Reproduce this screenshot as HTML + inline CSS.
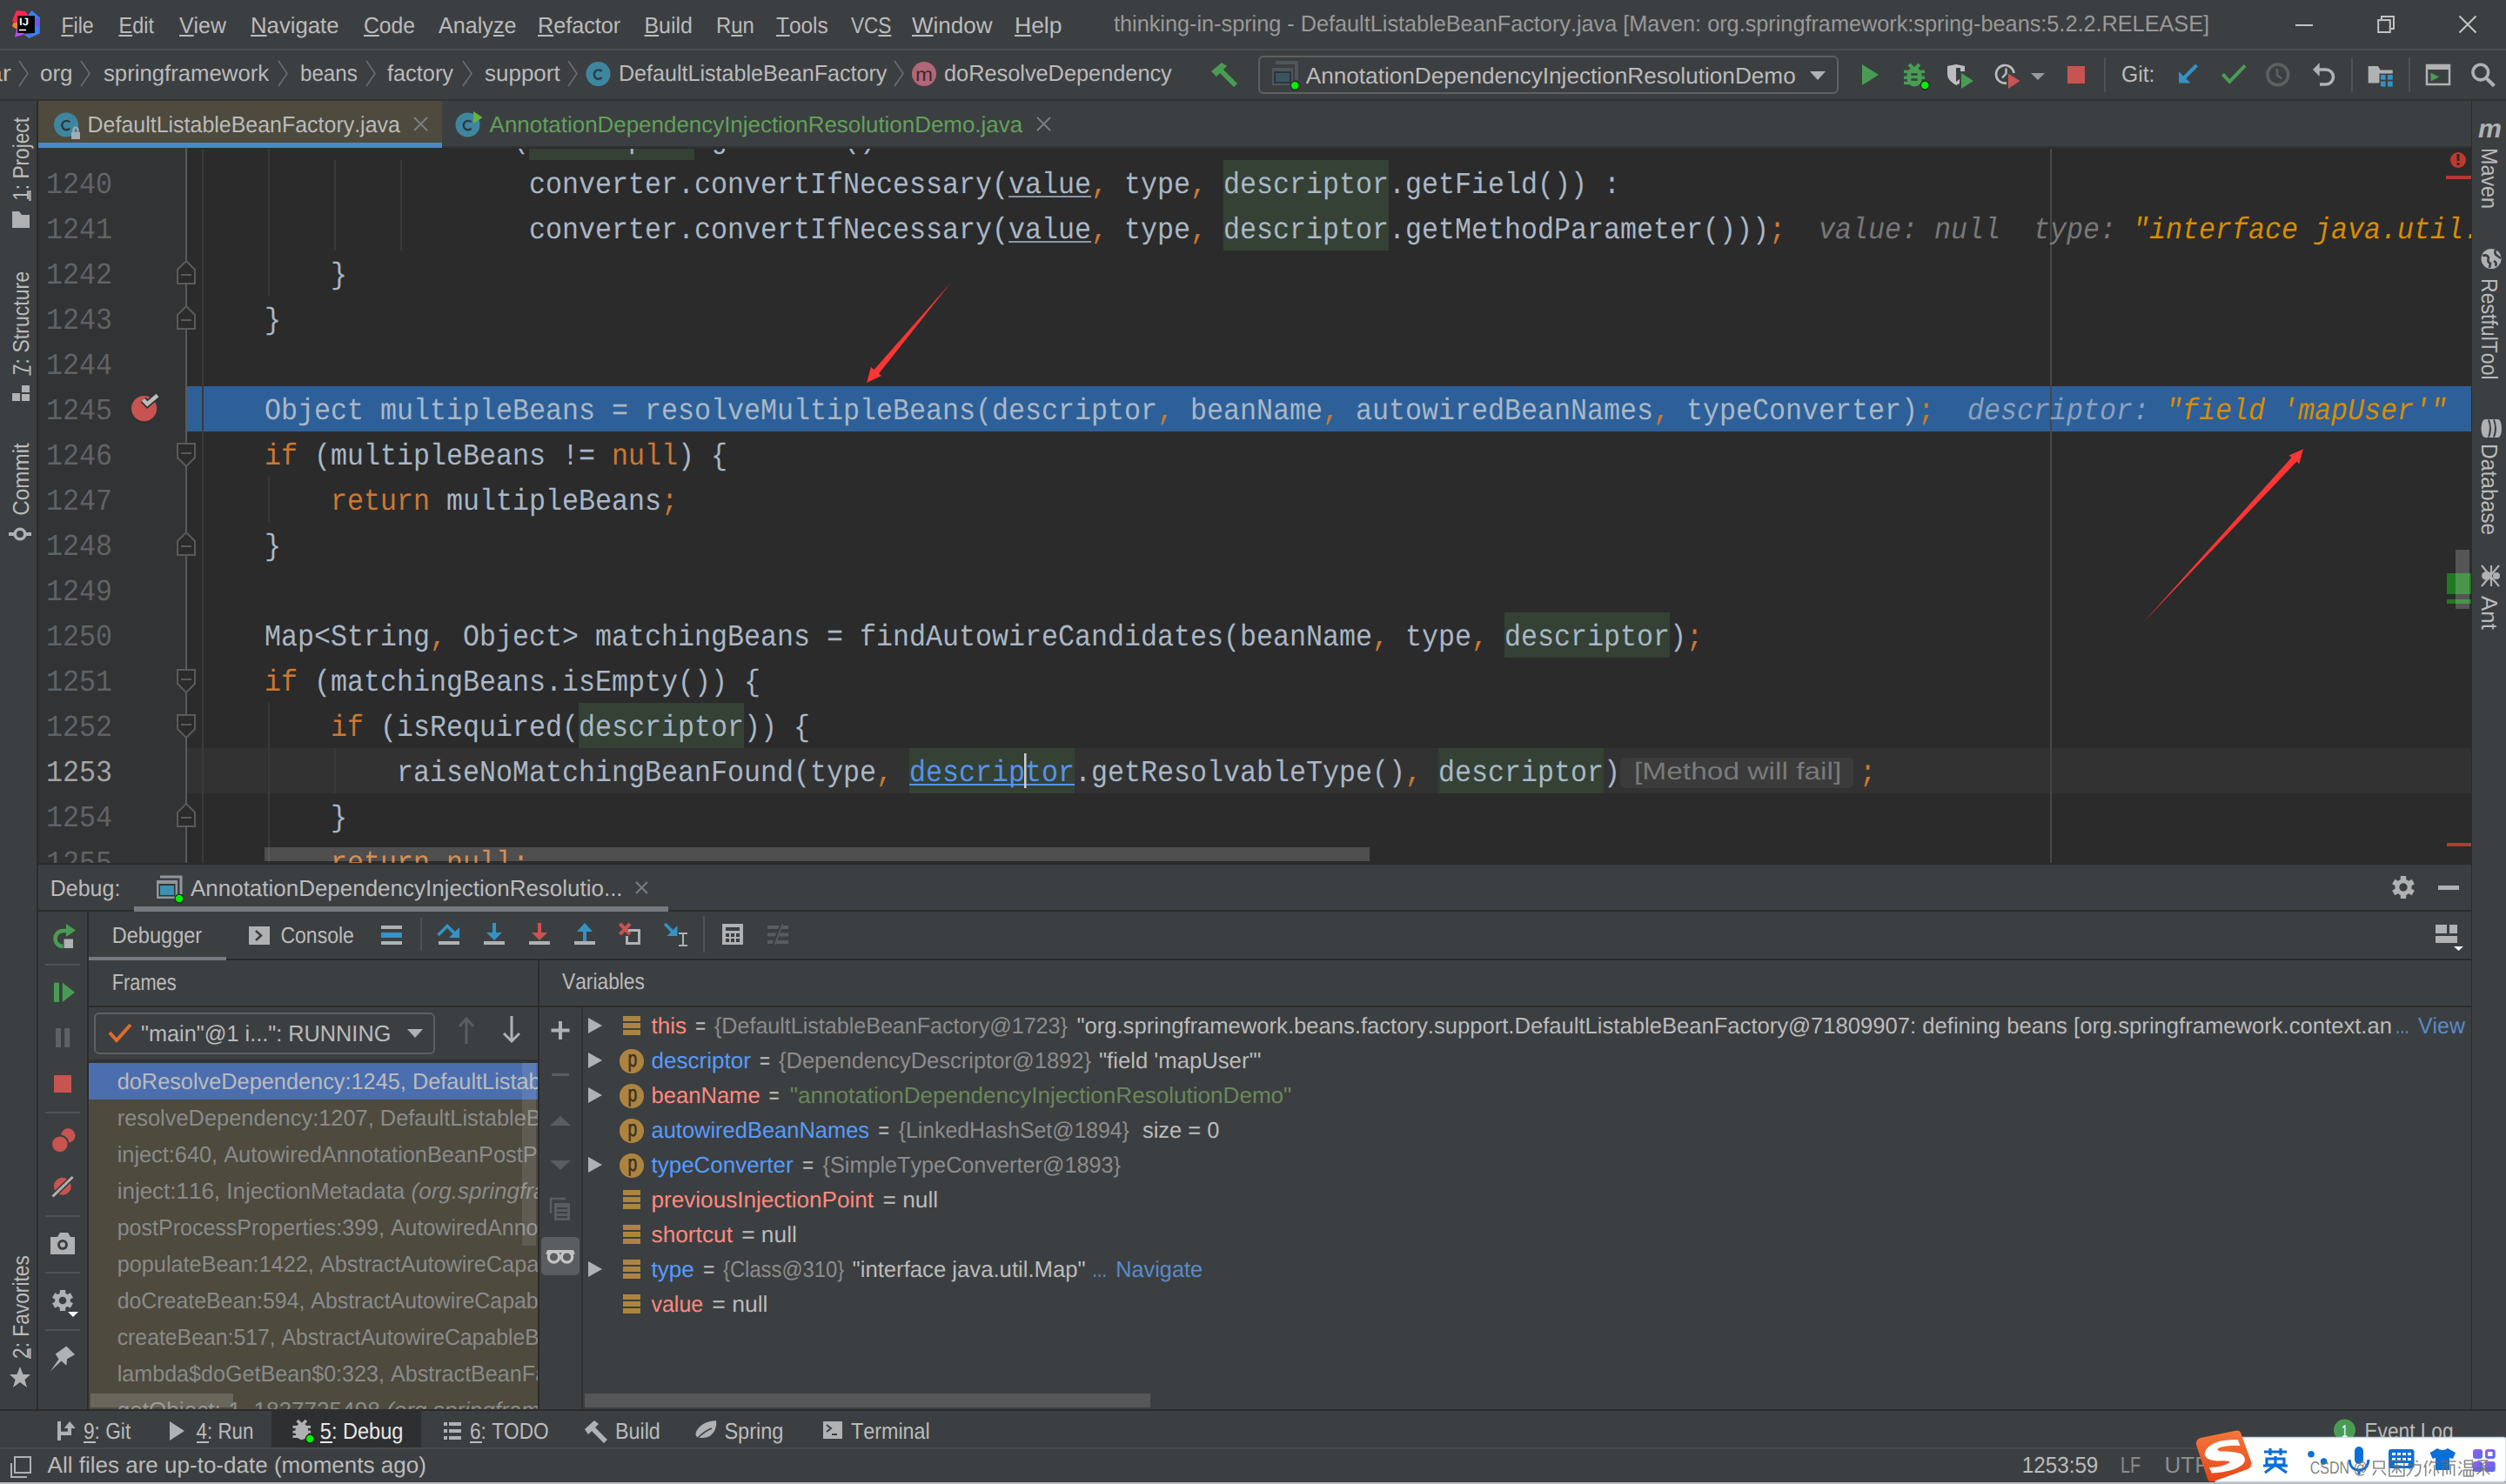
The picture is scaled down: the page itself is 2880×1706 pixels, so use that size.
<!DOCTYPE html>
<html><head><meta charset="utf-8"><title>IntelliJ IDEA - Debug</title>
<style>html,body{margin:0;padding:0;background:#3c3f41;overflow:hidden}svg{display:block}text{font-kerning:none;white-space:pre}</style></head>
<body><svg width="2880" height="1706" viewBox="0 0 2880 1706" text-rendering="geometricPrecision">
<rect x="0" y="0" width="2880" height="1706" fill="#3c3f41" />
<rect x="0" y="56" width="2880" height="2" fill="#4b4d4f" />
<polygon points="13.9,24.4 18.7,11.9 28.8,13.1 33.5,18.5 20.2,27" fill="#fe2857"/>
<polygon points="13.9,30.3 15.1,26.2 20.5,25.5 20.5,34.5" fill="#fc801d"/>
<polygon points="16.9,42.8 19,34 20.5,29 28,39.5" fill="#b74af7"/>
<polygon points="32.6,16.7 36.5,11.9 46,20.2 45.7,38.6 33.5,44 27,39.5 39.9,37.9" fill="#3d7cf0"/>
<polygon points="39.9,22 46,20.2 45.7,30 39.9,30" fill="#6b57e8"/>
<rect x="20.2" y="18.2" width="19.7" height="19.7" fill="#000000" />
<rect x="22" y="33.7" width="8.1" height="1.6" fill="#ffffff" />
<text x="22.00" y="28.8" font-family="Liberation Sans" font-size="12" fill="#ffffff" font-weight="bold" textLength="11.00" lengthAdjust="spacingAndGlyphs" >IJ</text>
<text x="70.40" y="38" font-family="Liberation Sans" font-size="26" fill="#bbbbbb" textLength="37.30" lengthAdjust="spacingAndGlyphs" >File</text>
<rect x="70.40" y="40" width="14.14" height="2" fill="#bbbbbb" />
<text x="136.50" y="38" font-family="Liberation Sans" font-size="26" fill="#bbbbbb" textLength="40.41" lengthAdjust="spacingAndGlyphs" >Edit</text>
<rect x="136.50" y="40" width="15.65" height="2" fill="#bbbbbb" />
<text x="206.00" y="38" font-family="Liberation Sans" font-size="26" fill="#bbbbbb" textLength="53.89" lengthAdjust="spacingAndGlyphs" >View</text>
<rect x="206.00" y="40" width="16.72" height="2" fill="#bbbbbb" />
<text x="288.00" y="38" font-family="Liberation Sans" font-size="26" fill="#bbbbbb" textLength="101.60" lengthAdjust="spacingAndGlyphs" >Navigate</text>
<rect x="288.00" y="40" width="18.60" height="2" fill="#bbbbbb" />
<text x="418.00" y="38" font-family="Liberation Sans" font-size="26" fill="#bbbbbb" textLength="59.13" lengthAdjust="spacingAndGlyphs" >Code</text>
<rect x="418.00" y="40" width="17.87" height="2" fill="#bbbbbb" />
<text x="504.00" y="38" font-family="Liberation Sans" font-size="26" fill="#bbbbbb" textLength="89.47" lengthAdjust="spacingAndGlyphs" >Analyze</text>
<rect x="566.91" y="40" width="12.58" height="2" fill="#bbbbbb" />
<text x="618.00" y="38" font-family="Liberation Sans" font-size="26" fill="#bbbbbb" textLength="95.26" lengthAdjust="spacingAndGlyphs" >Refactor</text>
<rect x="618.00" y="40" width="18.21" height="2" fill="#bbbbbb" />
<text x="740.50" y="38" font-family="Liberation Sans" font-size="26" fill="#bbbbbb" textLength="55.32" lengthAdjust="spacingAndGlyphs" >Build</text>
<rect x="740.50" y="40" width="16.60" height="2" fill="#bbbbbb" />
<text x="823.00" y="38" font-family="Liberation Sans" font-size="26" fill="#bbbbbb" textLength="43.71" lengthAdjust="spacingAndGlyphs" >Run</text>
<rect x="840.22" y="40" width="13.25" height="2" fill="#bbbbbb" />
<text x="892.00" y="38" font-family="Liberation Sans" font-size="26" fill="#bbbbbb" textLength="59.69" lengthAdjust="spacingAndGlyphs" >Tools</text>
<rect x="892.00" y="40" width="15.61" height="2" fill="#bbbbbb" />
<text x="978.00" y="38" font-family="Liberation Sans" font-size="26" fill="#bbbbbb" textLength="46.41" lengthAdjust="spacingAndGlyphs" >VCS</text>
<rect x="1009.35" y="40" width="15.05" height="2" fill="#bbbbbb" />
<text x="1048.00" y="38" font-family="Liberation Sans" font-size="26" fill="#bbbbbb" textLength="92.47" lengthAdjust="spacingAndGlyphs" >Window</text>
<rect x="1048.00" y="40" width="24.55" height="2" fill="#bbbbbb" />
<text x="1166.00" y="38" font-family="Liberation Sans" font-size="26" fill="#bbbbbb" textLength="54.48" lengthAdjust="spacingAndGlyphs" >Help</text>
<rect x="1166.00" y="40" width="19.14" height="2" fill="#bbbbbb" />
<text x="1280.00" y="36" font-family="Liberation Sans" font-size="26" fill="#999999" textLength="1259.02" lengthAdjust="spacingAndGlyphs" >thinking-in-spring - DefaultListableBeanFactory.java [Maven: org.springframework:spring-beans:5.2.2.RELEASE]</text>
<rect x="2638" y="28" width="20" height="2" fill="#c4c4c4" />
<rect x="2733.2" y="23.1" width="13.6" height="13.9" fill="none" stroke="#c4c4c4" stroke-width="2"/>
<path d="M2737 22 V18.9 H2751 V32.9 H2748" fill="none" stroke="#c4c4c4" stroke-width="2"/>
<path d="M2826.5 18.5 L2845.5 37.5 M2845.5 18.5 L2826.5 37.5" stroke="#c4c4c4" stroke-width="2"/>
<rect x="0" y="114" width="2880" height="2" fill="#323232" />
<text x="-20.83" y="93" font-family="Liberation Sans" font-size="26" fill="#bbbbbb" textLength="33.71" lengthAdjust="spacingAndGlyphs" >jar</text>
<path d="M22 70 L32 84.5 L22 99" fill="none" stroke="#6b6d6f" stroke-width="1.6"/>
<path d="M93 70 L103 84.5 L93 99" fill="none" stroke="#6b6d6f" stroke-width="1.6"/>
<path d="M320 70 L330 84.5 L320 99" fill="none" stroke="#6b6d6f" stroke-width="1.6"/>
<path d="M421 70 L431 84.5 L421 99" fill="none" stroke="#6b6d6f" stroke-width="1.6"/>
<path d="M532 70 L542 84.5 L532 99" fill="none" stroke="#6b6d6f" stroke-width="1.6"/>
<path d="M653 70 L663 84.5 L653 99" fill="none" stroke="#6b6d6f" stroke-width="1.6"/>
<path d="M1028 70 L1038 84.5 L1028 99" fill="none" stroke="#6b6d6f" stroke-width="1.6"/>
<text x="46.00" y="93" font-family="Liberation Sans" font-size="26" fill="#bbbbbb" textLength="37.56" lengthAdjust="spacingAndGlyphs" >org</text>
<text x="119.00" y="93" font-family="Liberation Sans" font-size="26" fill="#bbbbbb" textLength="190.13" lengthAdjust="spacingAndGlyphs" >springframework</text>
<text x="345.00" y="93" font-family="Liberation Sans" font-size="26" fill="#bbbbbb" textLength="65.83" lengthAdjust="spacingAndGlyphs" >beans</text>
<text x="445.00" y="93" font-family="Liberation Sans" font-size="26" fill="#bbbbbb" textLength="76.00" lengthAdjust="spacingAndGlyphs" >factory</text>
<text x="557.00" y="93" font-family="Liberation Sans" font-size="26" fill="#bbbbbb" textLength="86.69" lengthAdjust="spacingAndGlyphs" >support</text>
<text x="711.00" y="93" font-family="Liberation Sans" font-size="26" fill="#bbbbbb" textLength="308.30" lengthAdjust="spacingAndGlyphs" >DefaultListableBeanFactory</text>
<text x="1085.00" y="93" font-family="Liberation Sans" font-size="26" fill="#bbbbbb" textLength="261.79" lengthAdjust="spacingAndGlyphs" >doResolveDependency</text>
<circle cx="687.5" cy="85" r="14" fill="#3e86a0"/>
<path d="M691.7 82 A5.2 5.2 0 1 0 691.7 89.2" fill="none" stroke="#2b3a40" stroke-width="2.4"/>
<circle cx="1062" cy="85" r="14" fill="#b06778"/>
<text x="1052.00" y="93" font-family="Liberation Sans" font-size="22" fill="#3b2a2f" textLength="20.00" lengthAdjust="spacingAndGlyphs" >m</text>
<g fill="#499c54"><polygon points="1392,82 1404,72 1410,76 1406,80 1422,96 1418,100 1402,84 1398,88"/></g>
<rect x="1447" y="65" width="665" height="42" rx="5" fill="none" stroke="#5e6060" stroke-width="2"/>
<path d="M1466 72 H1490 V92" fill="none" stroke="#4f565b" stroke-width="4" stroke-linejoin="miter"/>
<path d="M1466 74 H1488 V92" fill="none" stroke="#4f565b" stroke-width="0"/>
<rect x="1462" y="78" width="24" height="20" fill="#4f565b" />
<rect x="1464" y="82" width="20" height="14" fill="#2f3437" />
<rect x="1466" y="84" width="16" height="10" fill="#3b5560" />
<circle cx="1488.2" cy="98.2" r="5.5" fill="#1f2a20"/><circle cx="1488.2" cy="98.2" r="4.3" fill="#00f000"/>
<text x="1500.70" y="96" font-family="Liberation Sans" font-size="26" fill="#bbbbbb" textLength="563.02" lengthAdjust="spacingAndGlyphs" >AnnotationDependencyInjectionResolutionDemo</text>
<polygon points="2080,82 2098,82 2089,92" fill="#afb1b3"/>
<polygon points="2140,74 2159,86 2140,98" fill="#499c54"/>
<g transform="translate(2200,88.4) scale(1.0)">
<path d="M-6 -14.5 L0 -8.5 L6 -14.5" fill="none" stroke="#499c54" stroke-width="4.2"/>
<rect x="-12" y="-7.7" width="24" height="3.4" fill="#499c54" />
<rect x="-12" y="-0.8999999999999999" width="24" height="3.4" fill="#499c54" />
<rect x="-12" y="5.3" width="24" height="3.4" fill="#499c54" />
<ellipse cx="0" cy="0" rx="8.8" ry="11.2" fill="#499c54"/>
<rect x="-3.6" y="-4.2" width="7.2" height="2.6" fill="#3c3f41" />
<rect x="-3.6" y="1.8" width="7.2" height="2.6" fill="#3c3f41" />
</g>
<circle cx="2212.2" cy="98.0" r="5.5" fill="#1f2a20"/><circle cx="2212.2" cy="98.0" r="4.3" fill="#00f000"/>
<path d="M2238 76 L2248 74 L2258 76 V82 H2253 V78 L2248 78 V94 L2252 91 V96 L2248 98 Q2238 92 2238 86 Z" fill="#bdbdbf"/>
<polygon points="2254,84 2268,93 2254,102" fill="#499c54"/>
<path d="M2306 95.5 A10.3 10.3 0 1 1 2314.5 84" fill="none" stroke="#bcbcbc" stroke-width="2.6"/><path d="M2305.5 78.5 V84.5 L2301 89.5" fill="none" stroke="#bcbcbc" stroke-width="2.4"/>
<polygon points="2307.9,84.4 2321.5,93.1 2307.9,101.9" fill="#c75450"/>
<polygon points="2334,84 2350,84 2342,92" fill="#9a9b9d"/>
<rect x="2376" y="76" width="20" height="20" fill="#c75450" />
<rect x="2418" y="66" width="2" height="40" fill="#505254" />
<text x="2438.00" y="94" font-family="Liberation Sans" font-size="26" fill="#bbbbbb" textLength="38.42" lengthAdjust="spacingAndGlyphs" >Git:</text>
<path d="M2524.5 75 L2509 90.5" stroke="#3592c4" stroke-width="4"/><polygon points="2504,82.3 2504,95.5 2517.5,95.5" fill="#3592c4"/>
<path d="M2554.5 85.4 L2562.3 93.8 L2580.2 75.3" fill="none" stroke="#499c54" stroke-width="4"/>
<circle cx="2617.8" cy="85.9" r="11.9" fill="none" stroke="#5e6060" stroke-width="3.5"/><path d="M2617 79 V86.5 L2622.5 90.5" fill="none" stroke="#5e6060" stroke-width="2.6"/>
<polygon points="2658,80 2665.7,72.2 2665.7,87.8" fill="#afb1b3"/><path d="M2665 80 H2673 A8.5 8.5 0 0 1 2673 97 H2666" fill="none" stroke="#afb1b3" stroke-width="3.6"/>
<rect x="2702" y="66" width="2" height="40" fill="#505254" />
<path d="M2721.7 76 H2733 L2735.5 80.4 H2749.7 V84.5 H2734.5 V95.5 H2721.7 Z" fill="#afb1b3"/>
<g fill="#3592c4"><rect x="2736" y="86" width="5.6" height="5.6"/><rect x="2744" y="86" width="5.7" height="5.6"/><rect x="2736" y="93.5" width="5.6" height="6"/><rect x="2744" y="93.5" width="5.7" height="6"/></g>
<rect x="2768" y="66" width="2" height="40" fill="#505254" />
<rect x="2789" y="75" width="26" height="22" fill="none" stroke="#afb1b3" stroke-width="2.5"/><rect x="2789" y="75" width="26" height="5" fill="#afb1b3"/>
<polygon points="2793.5,83.5 2803,88.5 2793.5,93.5" fill="#499c54"/>
<circle cx="2850.8" cy="83.1" r="8.8" fill="none" stroke="#afb1b3" stroke-width="3.6"/><path d="M2856.5 89 L2866.4 98.7" stroke="#afb1b3" stroke-width="4"/>
<rect x="42" y="116" width="2" height="1504" fill="#2b2b2b" />
<text transform="translate(33,230.80) rotate(-90)" font-family="Liberation Sans" font-size="26" fill="#bbbbbb" textLength="95.75" lengthAdjust="spacingAndGlyphs">1: Project</text>
<rect x="33.5" y="219" width="2" height="12" fill="#bbbbbb" />
<path d="M14 243 H22 L25 247 H34 V262 H14 Z" fill="#afb1b3"/>
<text transform="translate(33,431.30) rotate(-90)" font-family="Liberation Sans" font-size="26" fill="#bbbbbb" textLength="119.41" lengthAdjust="spacingAndGlyphs">7: Structure</text>
<rect x="33.5" y="420.5" width="2" height="11" fill="#bbbbbb" />
<g fill="#afb1b3"><rect x="14" y="452" width="9" height="9"/><rect x="25" y="443" width="9" height="8"/><rect x="25" y="453" width="9" height="8"/></g>
<text transform="translate(33,592.70) rotate(-90)" font-family="Liberation Sans" font-size="26" fill="#bbbbbb" textLength="83.48" lengthAdjust="spacingAndGlyphs">Commit</text>
<rect x="10" y="612" width="26" height="4" fill="#afb1b3" />
<circle cx="23" cy="614" r="5.8" fill="#3c3f41" stroke="#afb1b3" stroke-width="3.6"/>
<text transform="translate(33,1562.00) rotate(-90)" font-family="Liberation Sans" font-size="26" fill="#bbbbbb" textLength="118.81" lengthAdjust="spacingAndGlyphs">2: Favorites</text>
<rect x="33.5" y="1550" width="2" height="12" fill="#bbbbbb" />
<polygon points="23,1571 26.5,1580 35,1580 28.5,1586 31,1595 23,1589 15,1595 17.5,1586 11,1580 19.5,1580" fill="#afb1b3"/>
<rect x="2840" y="116" width="1" height="1504" fill="#2b2b2b" />
<text x="2848.00" y="158" font-family="Liberation Sans" font-size="30" fill="#afb1b3" font-style="italic" textLength="26.98" lengthAdjust="spacingAndGlyphs" font-weight="bold">m</text>
<text transform="translate(2852,170.00) rotate(90)" font-family="Liberation Sans" font-size="26" fill="#bbbbbb" textLength="70.01" lengthAdjust="spacingAndGlyphs">Maven</text>
<circle cx="2863" cy="297.5" r="11.5" fill="#afb1b3"/><path d="M2853 294 Q2858 292 2860 296 Q2858 301 2862 303 L2861 308 M2868 287 Q2866 292 2870 294 L2874 297 M2866 300 Q2870 302 2868 306" fill="none" stroke="#3c3f41" stroke-width="2.6"/>
<text transform="translate(2852,320.00) rotate(90)" font-family="Liberation Sans" font-size="26" fill="#bbbbbb" textLength="116.63" lengthAdjust="spacingAndGlyphs">RestfulTool</text>
<g fill="#afb1b3"><ellipse cx="2856" cy="492.5" rx="4.5" ry="10.5"/><rect x="2856" y="482" width="15" height="21"/><ellipse cx="2871" cy="492.5" rx="4" ry="10.5"/></g><path d="M2860 482.5 Q2864 492.5 2860 502.5 M2866 482.5 Q2870 492.5 2866 502.5" fill="none" stroke="#3c3f41" stroke-width="2"/>
<text transform="translate(2852,510.00) rotate(90)" font-family="Liberation Sans" font-size="26" fill="#bbbbbb" textLength="105.25" lengthAdjust="spacingAndGlyphs">Database</text>
<g fill="#afb1b3"><ellipse cx="2858" cy="662" rx="6" ry="5"/><ellipse cx="2869" cy="662" rx="4" ry="4"/></g><path d="M2852 650 L2872 674 M2872 650 L2852 674 M2863 650 V674" stroke="#afb1b3" stroke-width="2.2"/>
<text transform="translate(2852,685.00) rotate(90)" font-family="Liberation Sans" font-size="26" fill="#bbbbbb" textLength="39.02" lengthAdjust="spacingAndGlyphs">Ant</text>
<rect x="44" y="116" width="2796" height="54" fill="#3c3f41" />
<rect x="44" y="168" width="2796" height="2" fill="#323232" />
<rect x="44" y="116" width="464" height="48" fill="#4e4a3e" />
<rect x="44" y="164" width="464" height="6" fill="#4a88c7" />
<circle cx="76" cy="143.5" r="14" fill="#3e86a0"/>
<path d="M80.2 140.5 A5.2 5.2 0 1 0 80.2 147.7" fill="none" stroke="#2b3a40" stroke-width="2.4"/>
<path d="M84.5 152 V149 Q84.5 146.5 87 146.5 Q89.5 146.5 89.5 149 V152" fill="none" stroke="#a3acb4" stroke-width="2.2"/><rect x="82" y="151.8" width="10" height="8.2" fill="#a3acb4"/>
<text x="100.60" y="152" font-family="Liberation Sans" font-size="26" fill="#bbbbbb" textLength="359.32" lengthAdjust="spacingAndGlyphs" >DefaultListableBeanFactory.java</text>
<path d="M476 135 L491 150 M491 135 L476 150" stroke="#7b7e80" stroke-width="2"/>
<circle cx="537.5" cy="143.5" r="14" fill="#3e86a0"/>
<path d="M541.7 140.5 A5.2 5.2 0 1 0 541.7 147.7" fill="none" stroke="#2b3a40" stroke-width="2.4"/>
<polygon points="544,128 554.5,135 544,142" fill="#62b543"/>
<text x="562.60" y="152" font-family="Liberation Sans" font-size="26" fill="#62a05a" textLength="612.53" lengthAdjust="spacingAndGlyphs" >AnnotationDependencyInjectionResolutionDemo.java</text>
<path d="M1192 135 L1207 150 M1207 135 L1192 150" stroke="#7b7e80" stroke-width="2"/>
<rect x="44" y="170" width="2796" height="822" fill="#2b2b2b" />
<rect x="44" y="170" width="171" height="822" fill="#313335" />
<defs><clipPath id="edclip"><rect x="44" y="171" width="2796" height="821"/></clipPath><clipPath id="codeclip"><rect x="215" y="170" width="2625" height="822"/></clipPath></defs>
<g clip-path="url(#edclip)">
<rect x="215" y="860" width="2625" height="52" fill="#323232" />
<rect x="215" y="444" width="2625" height="52" fill="#2d6099" />
<rect x="608" y="132" width="190" height="52" fill="#344134" />
<rect x="1406" y="184" width="190" height="104" fill="#344134" />
<rect x="1729" y="704" width="190" height="52" fill="#344134" />
<rect x="665" y="808" width="190" height="52" fill="#344134" />
<rect x="1045" y="860" width="190" height="52" fill="#344134" />
<rect x="1653" y="860" width="190" height="52" fill="#344134" />
<rect x="232" y="132" width="2" height="884" fill="#393939" />
<rect x="308" y="132" width="2" height="208" fill="#393939" />
<rect x="384" y="184" width="2" height="104" fill="#393939" />
<rect x="460" y="184" width="2" height="104" fill="#393939" />
<rect x="308" y="548" width="2" height="52" fill="#393939" />
<rect x="308" y="808" width="2" height="156" fill="#393939" />
<rect x="384" y="860" width="2" height="52" fill="#393939" />
<rect x="308" y="964" width="2" height="52" fill="#393939" />
<rect x="2356" y="170" width="2" height="822" fill="#474747" />
<text x="456.00" y="170" font-family="Liberation Mono" font-size="35" fill="#cc7832" textLength="114.00" lengthAdjust="spacingAndGlyphs" >return</text>
<text x="570.00" y="170" font-family="Liberation Mono" font-size="35" fill="#a9b7c6" textLength="38.00" lengthAdjust="spacingAndGlyphs" > (</text>
<text x="608.00" y="170" font-family="Liberation Mono" font-size="35" fill="#a9b7c6" textLength="190.00" lengthAdjust="spacingAndGlyphs" >descriptor</text>
<text x="798.00" y="170" font-family="Liberation Mono" font-size="35" fill="#a9b7c6" textLength="19.00" lengthAdjust="spacingAndGlyphs" >.</text>
<text x="817.00" y="170" font-family="Liberation Mono" font-size="35" fill="#a9b7c6" textLength="152.00" lengthAdjust="spacingAndGlyphs" >getField</text>
<text x="969.00" y="170" font-family="Liberation Mono" font-size="35" fill="#a9b7c6" textLength="114.00" lengthAdjust="spacingAndGlyphs" >() != </text>
<text x="1083.00" y="170" font-family="Liberation Mono" font-size="35" fill="#cc7832" textLength="76.00" lengthAdjust="spacingAndGlyphs" >null</text>
<text x="1159.00" y="170" font-family="Liberation Mono" font-size="35" fill="#a9b7c6" textLength="38.00" lengthAdjust="spacingAndGlyphs" > ?</text>
<text x="608.00" y="222" font-family="Liberation Mono" font-size="35" fill="#a9b7c6" textLength="171.00" lengthAdjust="spacingAndGlyphs" >converter</text>
<text x="779.00" y="222" font-family="Liberation Mono" font-size="35" fill="#a9b7c6" textLength="19.00" lengthAdjust="spacingAndGlyphs" >.</text>
<text x="798.00" y="222" font-family="Liberation Mono" font-size="35" fill="#a9b7c6" textLength="342.00" lengthAdjust="spacingAndGlyphs" >convertIfNecessary</text>
<text x="1140.00" y="222" font-family="Liberation Mono" font-size="35" fill="#a9b7c6" textLength="19.00" lengthAdjust="spacingAndGlyphs" >(</text>
<text x="1159.00" y="222" font-family="Liberation Mono" font-size="35" fill="#a9b7c6" textLength="95.00" lengthAdjust="spacingAndGlyphs" >value</text>
<text x="1254.00" y="222" font-family="Liberation Mono" font-size="35" fill="#cc7832" textLength="19.00" lengthAdjust="spacingAndGlyphs" >,</text>
<text x="1292.00" y="222" font-family="Liberation Mono" font-size="35" fill="#a9b7c6" textLength="76.00" lengthAdjust="spacingAndGlyphs" >type</text>
<text x="1368.00" y="222" font-family="Liberation Mono" font-size="35" fill="#cc7832" textLength="19.00" lengthAdjust="spacingAndGlyphs" >,</text>
<text x="1406.00" y="222" font-family="Liberation Mono" font-size="35" fill="#a9b7c6" textLength="190.00" lengthAdjust="spacingAndGlyphs" >descriptor</text>
<text x="1596.00" y="222" font-family="Liberation Mono" font-size="35" fill="#a9b7c6" textLength="19.00" lengthAdjust="spacingAndGlyphs" >.</text>
<text x="1615.00" y="222" font-family="Liberation Mono" font-size="35" fill="#a9b7c6" textLength="152.00" lengthAdjust="spacingAndGlyphs" >getField</text>
<text x="1767.00" y="222" font-family="Liberation Mono" font-size="35" fill="#a9b7c6" textLength="95.00" lengthAdjust="spacingAndGlyphs" >()) :</text>
<text x="608.00" y="274" font-family="Liberation Mono" font-size="35" fill="#a9b7c6" textLength="171.00" lengthAdjust="spacingAndGlyphs" >converter</text>
<text x="779.00" y="274" font-family="Liberation Mono" font-size="35" fill="#a9b7c6" textLength="19.00" lengthAdjust="spacingAndGlyphs" >.</text>
<text x="798.00" y="274" font-family="Liberation Mono" font-size="35" fill="#a9b7c6" textLength="342.00" lengthAdjust="spacingAndGlyphs" >convertIfNecessary</text>
<text x="1140.00" y="274" font-family="Liberation Mono" font-size="35" fill="#a9b7c6" textLength="19.00" lengthAdjust="spacingAndGlyphs" >(</text>
<text x="1159.00" y="274" font-family="Liberation Mono" font-size="35" fill="#a9b7c6" textLength="95.00" lengthAdjust="spacingAndGlyphs" >value</text>
<text x="1254.00" y="274" font-family="Liberation Mono" font-size="35" fill="#cc7832" textLength="19.00" lengthAdjust="spacingAndGlyphs" >,</text>
<text x="1292.00" y="274" font-family="Liberation Mono" font-size="35" fill="#a9b7c6" textLength="76.00" lengthAdjust="spacingAndGlyphs" >type</text>
<text x="1368.00" y="274" font-family="Liberation Mono" font-size="35" fill="#cc7832" textLength="19.00" lengthAdjust="spacingAndGlyphs" >,</text>
<text x="1406.00" y="274" font-family="Liberation Mono" font-size="35" fill="#a9b7c6" textLength="190.00" lengthAdjust="spacingAndGlyphs" >descriptor</text>
<text x="1596.00" y="274" font-family="Liberation Mono" font-size="35" fill="#a9b7c6" textLength="19.00" lengthAdjust="spacingAndGlyphs" >.</text>
<text x="1615.00" y="274" font-family="Liberation Mono" font-size="35" fill="#a9b7c6" textLength="342.00" lengthAdjust="spacingAndGlyphs" >getMethodParameter</text>
<text x="1957.00" y="274" font-family="Liberation Mono" font-size="35" fill="#a9b7c6" textLength="76.00" lengthAdjust="spacingAndGlyphs" >()))</text>
<text x="2033.00" y="274" font-family="Liberation Mono" font-size="35" fill="#cc7832" textLength="19.00" lengthAdjust="spacingAndGlyphs" >;</text>
<text x="2090.00" y="274" font-family="Liberation Mono" font-size="35" fill="#787878" font-style="italic" textLength="114.00" lengthAdjust="spacingAndGlyphs" >value:</text>
<text x="2223.00" y="274" font-family="Liberation Mono" font-size="35" fill="#787878" font-style="italic" textLength="76.00" lengthAdjust="spacingAndGlyphs" >null</text>
<text x="2337.00" y="274" font-family="Liberation Mono" font-size="35" fill="#787878" font-style="italic" textLength="95.00" lengthAdjust="spacingAndGlyphs" >type:</text>
<text x="2451.00" y="274" font-family="Liberation Mono" font-size="35" fill="#d88c00" font-style="italic" textLength="475.00" lengthAdjust="spacingAndGlyphs" >&quot;interface java.util.Map&quot;</text>
<rect x="1159" y="225" width="95" height="2" fill="#8a96a8" />
<rect x="1159" y="277" width="95" height="2" fill="#8a96a8" />
<text x="380.00" y="326" font-family="Liberation Mono" font-size="35" fill="#a9b7c6" textLength="19.00" lengthAdjust="spacingAndGlyphs" >}</text>
<text x="304.00" y="378" font-family="Liberation Mono" font-size="35" fill="#a9b7c6" textLength="19.00" lengthAdjust="spacingAndGlyphs" >}</text>
<text x="304.00" y="482" font-family="Liberation Mono" font-size="35" fill="#a9b7c6" textLength="114.00" lengthAdjust="spacingAndGlyphs" >Object</text>
<text x="437.00" y="482" font-family="Liberation Mono" font-size="35" fill="#a9b7c6" textLength="247.00" lengthAdjust="spacingAndGlyphs" >multipleBeans</text>
<text x="684.00" y="482" font-family="Liberation Mono" font-size="35" fill="#a9b7c6" textLength="57.00" lengthAdjust="spacingAndGlyphs" > = </text>
<text x="741.00" y="482" font-family="Liberation Mono" font-size="35" fill="#a9b7c6" textLength="380.00" lengthAdjust="spacingAndGlyphs" >resolveMultipleBeans</text>
<text x="1121.00" y="482" font-family="Liberation Mono" font-size="35" fill="#a9b7c6" textLength="19.00" lengthAdjust="spacingAndGlyphs" >(</text>
<text x="1140.00" y="482" font-family="Liberation Mono" font-size="35" fill="#a9b7c6" textLength="190.00" lengthAdjust="spacingAndGlyphs" >descriptor</text>
<text x="1330.00" y="482" font-family="Liberation Mono" font-size="35" fill="#cc7832" textLength="19.00" lengthAdjust="spacingAndGlyphs" >,</text>
<text x="1368.00" y="482" font-family="Liberation Mono" font-size="35" fill="#a9b7c6" textLength="152.00" lengthAdjust="spacingAndGlyphs" >beanName</text>
<text x="1520.00" y="482" font-family="Liberation Mono" font-size="35" fill="#cc7832" textLength="19.00" lengthAdjust="spacingAndGlyphs" >,</text>
<text x="1558.00" y="482" font-family="Liberation Mono" font-size="35" fill="#a9b7c6" textLength="342.00" lengthAdjust="spacingAndGlyphs" >autowiredBeanNames</text>
<text x="1900.00" y="482" font-family="Liberation Mono" font-size="35" fill="#cc7832" textLength="19.00" lengthAdjust="spacingAndGlyphs" >,</text>
<text x="1938.00" y="482" font-family="Liberation Mono" font-size="35" fill="#a9b7c6" textLength="247.00" lengthAdjust="spacingAndGlyphs" >typeConverter</text>
<text x="2185.00" y="482" font-family="Liberation Mono" font-size="35" fill="#a9b7c6" textLength="19.00" lengthAdjust="spacingAndGlyphs" >)</text>
<text x="2204.00" y="482" font-family="Liberation Mono" font-size="35" fill="#cc7832" textLength="19.00" lengthAdjust="spacingAndGlyphs" >;</text>
<text x="2261.00" y="482" font-family="Liberation Mono" font-size="35" fill="#8ba0bd" font-style="italic" textLength="209.00" lengthAdjust="spacingAndGlyphs" >descriptor:</text>
<text x="2489.00" y="482" font-family="Liberation Mono" font-size="35" fill="#d88c00" font-style="italic" textLength="323.00" lengthAdjust="spacingAndGlyphs" >&quot;field &#x27;mapUser&#x27;&quot;</text>
<text x="304.00" y="534" font-family="Liberation Mono" font-size="35" fill="#cc7832" textLength="38.00" lengthAdjust="spacingAndGlyphs" >if</text>
<text x="342.00" y="534" font-family="Liberation Mono" font-size="35" fill="#a9b7c6" textLength="38.00" lengthAdjust="spacingAndGlyphs" > (</text>
<text x="380.00" y="534" font-family="Liberation Mono" font-size="35" fill="#a9b7c6" textLength="247.00" lengthAdjust="spacingAndGlyphs" >multipleBeans</text>
<text x="627.00" y="534" font-family="Liberation Mono" font-size="35" fill="#a9b7c6" textLength="76.00" lengthAdjust="spacingAndGlyphs" > != </text>
<text x="703.00" y="534" font-family="Liberation Mono" font-size="35" fill="#cc7832" textLength="76.00" lengthAdjust="spacingAndGlyphs" >null</text>
<text x="779.00" y="534" font-family="Liberation Mono" font-size="35" fill="#a9b7c6" textLength="57.00" lengthAdjust="spacingAndGlyphs" >) {</text>
<text x="380.00" y="586" font-family="Liberation Mono" font-size="35" fill="#cc7832" textLength="114.00" lengthAdjust="spacingAndGlyphs" >return</text>
<text x="513.00" y="586" font-family="Liberation Mono" font-size="35" fill="#a9b7c6" textLength="247.00" lengthAdjust="spacingAndGlyphs" >multipleBeans</text>
<text x="760.00" y="586" font-family="Liberation Mono" font-size="35" fill="#cc7832" textLength="19.00" lengthAdjust="spacingAndGlyphs" >;</text>
<text x="304.00" y="638" font-family="Liberation Mono" font-size="35" fill="#a9b7c6" textLength="19.00" lengthAdjust="spacingAndGlyphs" >}</text>
<text x="304.00" y="742" font-family="Liberation Mono" font-size="35" fill="#a9b7c6" textLength="57.00" lengthAdjust="spacingAndGlyphs" >Map</text>
<text x="361.00" y="742" font-family="Liberation Mono" font-size="35" fill="#a9b7c6" textLength="19.00" lengthAdjust="spacingAndGlyphs" >&lt;</text>
<text x="380.00" y="742" font-family="Liberation Mono" font-size="35" fill="#a9b7c6" textLength="114.00" lengthAdjust="spacingAndGlyphs" >String</text>
<text x="494.00" y="742" font-family="Liberation Mono" font-size="35" fill="#cc7832" textLength="19.00" lengthAdjust="spacingAndGlyphs" >,</text>
<text x="532.00" y="742" font-family="Liberation Mono" font-size="35" fill="#a9b7c6" textLength="114.00" lengthAdjust="spacingAndGlyphs" >Object</text>
<text x="646.00" y="742" font-family="Liberation Mono" font-size="35" fill="#a9b7c6" textLength="38.00" lengthAdjust="spacingAndGlyphs" >&gt; </text>
<text x="684.00" y="742" font-family="Liberation Mono" font-size="35" fill="#a9b7c6" textLength="247.00" lengthAdjust="spacingAndGlyphs" >matchingBeans</text>
<text x="931.00" y="742" font-family="Liberation Mono" font-size="35" fill="#a9b7c6" textLength="57.00" lengthAdjust="spacingAndGlyphs" > = </text>
<text x="988.00" y="742" font-family="Liberation Mono" font-size="35" fill="#a9b7c6" textLength="418.00" lengthAdjust="spacingAndGlyphs" >findAutowireCandidates</text>
<text x="1406.00" y="742" font-family="Liberation Mono" font-size="35" fill="#a9b7c6" textLength="19.00" lengthAdjust="spacingAndGlyphs" >(</text>
<text x="1425.00" y="742" font-family="Liberation Mono" font-size="35" fill="#a9b7c6" textLength="152.00" lengthAdjust="spacingAndGlyphs" >beanName</text>
<text x="1577.00" y="742" font-family="Liberation Mono" font-size="35" fill="#cc7832" textLength="19.00" lengthAdjust="spacingAndGlyphs" >,</text>
<text x="1615.00" y="742" font-family="Liberation Mono" font-size="35" fill="#a9b7c6" textLength="76.00" lengthAdjust="spacingAndGlyphs" >type</text>
<text x="1691.00" y="742" font-family="Liberation Mono" font-size="35" fill="#cc7832" textLength="19.00" lengthAdjust="spacingAndGlyphs" >,</text>
<text x="1729.00" y="742" font-family="Liberation Mono" font-size="35" fill="#a9b7c6" textLength="190.00" lengthAdjust="spacingAndGlyphs" >descriptor</text>
<text x="1919.00" y="742" font-family="Liberation Mono" font-size="35" fill="#a9b7c6" textLength="19.00" lengthAdjust="spacingAndGlyphs" >)</text>
<text x="1938.00" y="742" font-family="Liberation Mono" font-size="35" fill="#cc7832" textLength="19.00" lengthAdjust="spacingAndGlyphs" >;</text>
<text x="304.00" y="794" font-family="Liberation Mono" font-size="35" fill="#cc7832" textLength="38.00" lengthAdjust="spacingAndGlyphs" >if</text>
<text x="342.00" y="794" font-family="Liberation Mono" font-size="35" fill="#a9b7c6" textLength="38.00" lengthAdjust="spacingAndGlyphs" > (</text>
<text x="380.00" y="794" font-family="Liberation Mono" font-size="35" fill="#a9b7c6" textLength="247.00" lengthAdjust="spacingAndGlyphs" >matchingBeans</text>
<text x="627.00" y="794" font-family="Liberation Mono" font-size="35" fill="#a9b7c6" textLength="19.00" lengthAdjust="spacingAndGlyphs" >.</text>
<text x="646.00" y="794" font-family="Liberation Mono" font-size="35" fill="#a9b7c6" textLength="133.00" lengthAdjust="spacingAndGlyphs" >isEmpty</text>
<text x="779.00" y="794" font-family="Liberation Mono" font-size="35" fill="#a9b7c6" textLength="95.00" lengthAdjust="spacingAndGlyphs" >()) {</text>
<text x="380.00" y="846" font-family="Liberation Mono" font-size="35" fill="#cc7832" textLength="38.00" lengthAdjust="spacingAndGlyphs" >if</text>
<text x="418.00" y="846" font-family="Liberation Mono" font-size="35" fill="#a9b7c6" textLength="38.00" lengthAdjust="spacingAndGlyphs" > (</text>
<text x="456.00" y="846" font-family="Liberation Mono" font-size="35" fill="#a9b7c6" textLength="190.00" lengthAdjust="spacingAndGlyphs" >isRequired</text>
<text x="646.00" y="846" font-family="Liberation Mono" font-size="35" fill="#a9b7c6" textLength="19.00" lengthAdjust="spacingAndGlyphs" >(</text>
<text x="665.00" y="846" font-family="Liberation Mono" font-size="35" fill="#a9b7c6" textLength="190.00" lengthAdjust="spacingAndGlyphs" >descriptor</text>
<text x="855.00" y="846" font-family="Liberation Mono" font-size="35" fill="#a9b7c6" textLength="76.00" lengthAdjust="spacingAndGlyphs" >)) {</text>
<text x="456.00" y="898" font-family="Liberation Mono" font-size="35" fill="#a9b7c6" textLength="456.00" lengthAdjust="spacingAndGlyphs" >raiseNoMatchingBeanFound</text>
<text x="912.00" y="898" font-family="Liberation Mono" font-size="35" fill="#a9b7c6" textLength="19.00" lengthAdjust="spacingAndGlyphs" >(</text>
<text x="931.00" y="898" font-family="Liberation Mono" font-size="35" fill="#a9b7c6" textLength="76.00" lengthAdjust="spacingAndGlyphs" >type</text>
<text x="1007.00" y="898" font-family="Liberation Mono" font-size="35" fill="#cc7832" textLength="19.00" lengthAdjust="spacingAndGlyphs" >,</text>
<text x="1045.00" y="898" font-family="Liberation Mono" font-size="35" fill="#5394ec" textLength="190.00" lengthAdjust="spacingAndGlyphs" >descriptor</text>
<rect x="1045" y="901" width="190" height="2" fill="#5394ec" />
<text x="1235.00" y="898" font-family="Liberation Mono" font-size="35" fill="#a9b7c6" textLength="19.00" lengthAdjust="spacingAndGlyphs" >.</text>
<text x="1254.00" y="898" font-family="Liberation Mono" font-size="35" fill="#a9b7c6" textLength="323.00" lengthAdjust="spacingAndGlyphs" >getResolvableType</text>
<text x="1577.00" y="898" font-family="Liberation Mono" font-size="35" fill="#a9b7c6" textLength="38.00" lengthAdjust="spacingAndGlyphs" >()</text>
<text x="1615.00" y="898" font-family="Liberation Mono" font-size="35" fill="#cc7832" textLength="19.00" lengthAdjust="spacingAndGlyphs" >,</text>
<text x="1653.00" y="898" font-family="Liberation Mono" font-size="35" fill="#a9b7c6" textLength="190.00" lengthAdjust="spacingAndGlyphs" >descriptor</text>
<text x="1843.00" y="898" font-family="Liberation Mono" font-size="35" fill="#a9b7c6" textLength="19.00" lengthAdjust="spacingAndGlyphs" >)</text>
<rect x="1862" y="871" width="268" height="35" rx="6" fill="#3b3b3b"/>
<text x="1878.00" y="896" font-family="Liberation Sans" font-size="28" fill="#7a7a7a" textLength="238.26" lengthAdjust="spacingAndGlyphs" >[Method will fail]</text>
<text x="2137.00" y="898" font-family="Liberation Mono" font-size="35" fill="#cc7832" textLength="19.00" lengthAdjust="spacingAndGlyphs" >;</text>
<rect x="1177" y="866" width="2.5" height="40" fill="#cfcfcf" />
<text x="380.00" y="950" font-family="Liberation Mono" font-size="35" fill="#a9b7c6" textLength="19.00" lengthAdjust="spacingAndGlyphs" >}</text>
<text x="380.00" y="1002" font-family="Liberation Mono" font-size="35" fill="#cc7832" textLength="114.00" lengthAdjust="spacingAndGlyphs" >return</text>
<text x="513.00" y="1002" font-family="Liberation Mono" font-size="35" fill="#cc7832" textLength="76.00" lengthAdjust="spacingAndGlyphs" >null</text>
<text x="589.00" y="1002" font-family="Liberation Mono" font-size="35" fill="#cc7832" textLength="19.00" lengthAdjust="spacingAndGlyphs" >;</text>
</g>
<text x="53.00" y="222" font-family="Liberation Mono" font-size="35" fill="#606366" textLength="76.00" lengthAdjust="spacingAndGlyphs" clip-path="url(#edclip)">1240</text>
<text x="53.00" y="274" font-family="Liberation Mono" font-size="35" fill="#606366" textLength="76.00" lengthAdjust="spacingAndGlyphs" clip-path="url(#edclip)">1241</text>
<text x="53.00" y="326" font-family="Liberation Mono" font-size="35" fill="#606366" textLength="76.00" lengthAdjust="spacingAndGlyphs" clip-path="url(#edclip)">1242</text>
<text x="53.00" y="378" font-family="Liberation Mono" font-size="35" fill="#606366" textLength="76.00" lengthAdjust="spacingAndGlyphs" clip-path="url(#edclip)">1243</text>
<text x="53.00" y="430" font-family="Liberation Mono" font-size="35" fill="#606366" textLength="76.00" lengthAdjust="spacingAndGlyphs" clip-path="url(#edclip)">1244</text>
<text x="53.00" y="482" font-family="Liberation Mono" font-size="35" fill="#606366" textLength="76.00" lengthAdjust="spacingAndGlyphs" clip-path="url(#edclip)">1245</text>
<text x="53.00" y="534" font-family="Liberation Mono" font-size="35" fill="#606366" textLength="76.00" lengthAdjust="spacingAndGlyphs" clip-path="url(#edclip)">1246</text>
<text x="53.00" y="586" font-family="Liberation Mono" font-size="35" fill="#606366" textLength="76.00" lengthAdjust="spacingAndGlyphs" clip-path="url(#edclip)">1247</text>
<text x="53.00" y="638" font-family="Liberation Mono" font-size="35" fill="#606366" textLength="76.00" lengthAdjust="spacingAndGlyphs" clip-path="url(#edclip)">1248</text>
<text x="53.00" y="690" font-family="Liberation Mono" font-size="35" fill="#606366" textLength="76.00" lengthAdjust="spacingAndGlyphs" clip-path="url(#edclip)">1249</text>
<text x="53.00" y="742" font-family="Liberation Mono" font-size="35" fill="#606366" textLength="76.00" lengthAdjust="spacingAndGlyphs" clip-path="url(#edclip)">1250</text>
<text x="53.00" y="794" font-family="Liberation Mono" font-size="35" fill="#606366" textLength="76.00" lengthAdjust="spacingAndGlyphs" clip-path="url(#edclip)">1251</text>
<text x="53.00" y="846" font-family="Liberation Mono" font-size="35" fill="#606366" textLength="76.00" lengthAdjust="spacingAndGlyphs" clip-path="url(#edclip)">1252</text>
<text x="53.00" y="898" font-family="Liberation Mono" font-size="35" fill="#a4a3a3" textLength="76.00" lengthAdjust="spacingAndGlyphs" clip-path="url(#edclip)">1253</text>
<text x="53.00" y="950" font-family="Liberation Mono" font-size="35" fill="#606366" textLength="76.00" lengthAdjust="spacingAndGlyphs" clip-path="url(#edclip)">1254</text>
<text x="53.00" y="1002" font-family="Liberation Mono" font-size="35" fill="#606366" textLength="76.00" lengthAdjust="spacingAndGlyphs" clip-path="url(#edclip)">1255</text>
<rect x="213" y="170" width="2" height="822" fill="#5a5a5a" />
<path d="M204 326 V310 L214 300 L224 310 V326 Z" fill="#2b2b2b" stroke="#5a5a5a" stroke-width="2"/>
<rect x="208" y="315" width="12" height="2" fill="#5a5a5a" />
<path d="M204 378 V362 L214 352 L224 362 V378 Z" fill="#2b2b2b" stroke="#5a5a5a" stroke-width="2"/>
<rect x="208" y="367" width="12" height="2" fill="#5a5a5a" />
<path d="M204 638 V622 L214 612 L224 622 V638 Z" fill="#2b2b2b" stroke="#5a5a5a" stroke-width="2"/>
<rect x="208" y="627" width="12" height="2" fill="#5a5a5a" />
<path d="M204 950 V934 L214 924 L224 934 V950 Z" fill="#2b2b2b" stroke="#5a5a5a" stroke-width="2"/>
<rect x="208" y="939" width="12" height="2" fill="#5a5a5a" />
<path d="M204 510 V526 L214 536 L224 526 V510 Z" fill="#2b2b2b" stroke="#5a5a5a" stroke-width="2"/>
<rect x="208" y="520" width="12" height="2" fill="#5a5a5a" />
<path d="M204 770 V786 L214 796 L224 786 V770 Z" fill="#2b2b2b" stroke="#5a5a5a" stroke-width="2"/>
<rect x="208" y="780" width="12" height="2" fill="#5a5a5a" />
<path d="M204 822 V838 L214 848 L224 838 V822 Z" fill="#2b2b2b" stroke="#5a5a5a" stroke-width="2"/>
<rect x="208" y="832" width="12" height="2" fill="#5a5a5a" />
<circle cx="165.6" cy="469.6" r="14.6" fill="#c75450"/>
<path d="M164.5 459.5 L169.3 464.5 L181 454.5" fill="none" stroke="#313335" stroke-width="8"/>
<path d="M164.5 459.5 L169.3 464.5 L181 454.5" fill="none" stroke="#bcbcbc" stroke-width="4.5"/>
<rect x="304" y="974" width="1270" height="16" fill="#ffffff" fill-opacity="0.17"/>
<circle cx="2825" cy="184" r="9" fill="#c0392b"/>
<rect x="2823.5" y="177" width="3" height="8" fill="#2b2b2b" />
<rect x="2823.5" y="187" width="3" height="3" fill="#2b2b2b" />
<rect x="2811" y="202" width="29" height="4" fill="#b23a33" />
<rect x="2812" y="659" width="28" height="24" fill="#1f7a1f" />
<rect x="2812" y="689" width="28" height="5" fill="#1f7a1f" />
<rect x="2812" y="969" width="28" height="4" fill="#b23a33" />
<rect x="2822" y="632" width="16" height="68" fill="#ffffff" fill-opacity="0.2"/>
<rect x="44" y="992" width="2796" height="2" fill="#2b2b2b" />
<rect x="44" y="994" width="2796" height="52" fill="#3c3f41" />
<rect x="44" y="1046" width="2796" height="2" fill="#2b2b2b" />
<text x="57.80" y="1030" font-family="Liberation Sans" font-size="26" fill="#bbbbbb" textLength="80.52" lengthAdjust="spacingAndGlyphs" >Debug:</text>
<path d="M184 1008 H208 V1028" fill="none" stroke="#8f979e" stroke-width="3"/>
<rect x="180" y="1012" width="24" height="21" fill="#8f979e" />
<rect x="182.5" y="1016" width="19" height="14.5" fill="#2f3437" />
<rect x="184" y="1018" width="16" height="11" fill="#3f8fb0" />
<circle cx="206" cy="1033" r="5.5" fill="#1f2a20"/><circle cx="206" cy="1033" r="4.3" fill="#00f000"/>
<text x="219.00" y="1030" font-family="Liberation Sans" font-size="26" fill="#bbbbbb" textLength="496.58" lengthAdjust="spacingAndGlyphs" >AnnotationDependencyInjectionResolutio...</text>
<path d="M731 1014 L744 1027 M744 1014 L731 1027" stroke="#7b7e80" stroke-width="2"/>
<rect x="154" y="1042" width="614" height="6" fill="#747a80" />
<rect x="2758.8" y="1007" width="6.4" height="13" fill="#afb1b3" transform="rotate(0.0 2762 1020)"/>
<rect x="2758.8" y="1007" width="6.4" height="13" fill="#afb1b3" transform="rotate(60.0 2762 1020)"/>
<rect x="2758.8" y="1007" width="6.4" height="13" fill="#afb1b3" transform="rotate(120.0 2762 1020)"/>
<rect x="2758.8" y="1007" width="6.4" height="13" fill="#afb1b3" transform="rotate(180.0 2762 1020)"/>
<rect x="2758.8" y="1007" width="6.4" height="13" fill="#afb1b3" transform="rotate(240.0 2762 1020)"/>
<rect x="2758.8" y="1007" width="6.4" height="13" fill="#afb1b3" transform="rotate(300.0 2762 1020)"/>
<circle cx="2762" cy="1020" r="9.62" fill="#afb1b3"/>
<circle cx="2762" cy="1020" r="4.68" fill="#3c3f41"/>
<rect x="2802" y="1018" width="24" height="5" fill="#afb1b3" />
<rect x="102" y="1102" width="2738" height="2" fill="#2b2b2b" />
<rect x="100" y="1048" width="2" height="572" fill="#2b2b2b" />
<text x="128.70" y="1084" font-family="Liberation Sans" font-size="26" fill="#bbbbbb" textLength="103.53" lengthAdjust="spacingAndGlyphs" >Debugger</text>
<rect x="102" y="1100" width="158" height="4" fill="#747a80" />
<rect x="286" y="1065" width="24" height="21" fill="#afb1b3"/><path d="M294 1070 L300 1075.5 L294 1081" fill="none" stroke="#3c3f41" stroke-width="2.5"/>
<text x="322.40" y="1084" font-family="Liberation Sans" font-size="26" fill="#bbbbbb" textLength="84.53" lengthAdjust="spacingAndGlyphs" >Console</text>
<rect x="438" y="1064" width="24" height="4" fill="#afb1b3" />
<rect x="438" y="1072" width="24" height="6" fill="#3592c4" />
<rect x="438" y="1082" width="24" height="4" fill="#afb1b3" />
<rect x="483" y="1055" width="2" height="38" fill="#505254" />
<path d="M503.5 1075 L514 1064.5 L522 1072.5" fill="none" stroke="#3592c4" stroke-width="3.5"/><polygon points="528,1066 528,1078 516,1078" fill="#3592c4"/>
<rect x="504" y="1082" width="24" height="4" fill="#afb1b3" />
<rect x="566" y="1061" width="4" height="13" fill="#3592c4"/><polygon points="559,1072 577,1072 568,1081" fill="#3592c4"/>
<rect x="556" y="1082" width="24" height="4" fill="#afb1b3" />
<rect x="618" y="1061" width="4" height="13" fill="#c75450"/><polygon points="611,1072 629,1072 620,1081" fill="#c75450"/>
<rect x="608" y="1082" width="24" height="4" fill="#afb1b3" />
<rect x="670" y="1068" width="4" height="14" fill="#3592c4"/><polygon points="663,1071 681,1071 672,1061" fill="#3592c4"/>
<rect x="660" y="1082" width="24" height="4" fill="#afb1b3" />
<path d="M712.5 1062 L724 1074 M724 1062 L712.5 1074" stroke="#c75450" stroke-width="4"/><path d="M722 1069.5 H734.5 V1084.5 H720.5 V1076" fill="none" stroke="#afb1b3" stroke-width="3"/>
<path d="M764 1062 L775 1073" stroke="#3592c4" stroke-width="3.5"/><polygon points="778.5,1064 778.5,1076 766.5,1076" fill="#3592c4"/>
<path d="M780 1073 H790 M785 1073 V1087 M780 1087 H790" stroke="#afb1b3" stroke-width="2"/>
<rect x="808" y="1053" width="2" height="42" fill="#505254" />
<rect x="830" y="1062" width="24" height="24" fill="#afb1b3"/>
<g fill="#3c3f41"><rect x="834" y="1066" width="16" height="4"/><rect x="834" y="1073" width="4" height="4"/><rect x="840" y="1073" width="4" height="4"/><rect x="846" y="1073" width="4" height="4"/><rect x="834" y="1079" width="4" height="4"/><rect x="840" y="1079" width="4" height="4"/><rect x="846" y="1079" width="4" height="4"/></g>
<g fill="#5a5d5f"><rect x="882" y="1064" width="24" height="4"/><rect x="882" y="1072.5" width="24" height="4"/><rect x="882" y="1081" width="24" height="4"/></g><path d="M889 1087 L899 1061" stroke="#3c3f41" stroke-width="4"/><path d="M890.5 1086 L899.5 1062" stroke="#5a5d5f" stroke-width="1.5"/>
<g fill="#afb1b3"><rect x="2799" y="1063" width="13" height="10"/><rect x="2815" y="1063" width="9" height="10"/><rect x="2799" y="1076" width="25" height="8"/></g><polygon points="2820,1088 2831,1088 2825.5,1093" fill="#ffffff"/>
<path d="M72.5 1088 A9 9 0 0 1 72.5 1070 H77" fill="none" stroke="#499c54" stroke-width="4.5"/>
<polygon points="76,1062 87,1069.5 76,1077" fill="#499c54"/>
<rect x="73.5" y="1079.5" width="10.5" height="10.5" fill="#afb1b3" />
<rect x="52" y="1108" width="40" height="2" fill="#505254" />
<rect x="62" y="1129.7" width="6" height="22.2" fill="#499c54" />
<polygon points="71.8,1129.7 86,1140.8 71.8,1151.9" fill="#499c54"/>
<rect x="64" y="1182" width="6" height="22" fill="#5f6163" />
<rect x="74.2" y="1182" width="6" height="22" fill="#5f6163" />
<rect x="62" y="1236" width="20" height="20" fill="#c75450" />
<rect x="52" y="1278" width="40" height="2" fill="#505254" />
<circle cx="78.2" cy="1305.5" r="8.2" fill="#c75450"/><circle cx="68.8" cy="1315.3" r="10.8" fill="#3c3f41"/><circle cx="68.8" cy="1315.3" r="8.8" fill="#c75450"/>
<circle cx="71.8" cy="1363.7" r="10" fill="#c75450"/><path d="M60.5 1375.5 L83.6 1353" stroke="#3c3f41" stroke-width="6"/><path d="M60.5 1375.5 L83.6 1353" stroke="#afb1b3" stroke-width="3"/>
<rect x="52" y="1397" width="40" height="2" fill="#505254" />
<path d="M58 1422 H66 L69 1417 H78 L81 1422 H86 V1442 H58 Z" fill="#afb1b3"/><circle cx="72" cy="1431" r="6" fill="#3c3f41"/><circle cx="72" cy="1431" r="3" fill="#afb1b3"/>
<rect x="52" y="1462" width="40" height="2" fill="#505254" />
<rect x="68.8" y="1483" width="6.4" height="12" fill="#afb1b3" transform="rotate(0.0 72 1495)"/>
<rect x="68.8" y="1483" width="6.4" height="12" fill="#afb1b3" transform="rotate(60.0 72 1495)"/>
<rect x="68.8" y="1483" width="6.4" height="12" fill="#afb1b3" transform="rotate(120.0 72 1495)"/>
<rect x="68.8" y="1483" width="6.4" height="12" fill="#afb1b3" transform="rotate(180.0 72 1495)"/>
<rect x="68.8" y="1483" width="6.4" height="12" fill="#afb1b3" transform="rotate(240.0 72 1495)"/>
<rect x="68.8" y="1483" width="6.4" height="12" fill="#afb1b3" transform="rotate(300.0 72 1495)"/>
<circle cx="72" cy="1495" r="8.879999999999999" fill="#afb1b3"/>
<circle cx="72" cy="1495" r="4.32" fill="#3c3f41"/>
<polygon points="78,1508 90,1508 84,1514" fill="#ffffff"/>
<rect x="52" y="1528" width="40" height="2" fill="#505254" />
<path d="M63.7 1556.4 L76.4 1547.5 L86 1557.2 L77.1 1562.3 L76.4 1569.8 L70.5 1564.5 L57.8 1576.4 L67.5 1562.5 Z" fill="#afb1b3"/>
<rect x="102" y="1104" width="516" height="52" fill="#3c3f41" />
<rect x="102" y="1156" width="2738" height="2" fill="#2b2b2b" />
<text x="128.70" y="1137.5" font-family="Liberation Sans" font-size="26" fill="#bbbbbb" textLength="73.98" lengthAdjust="spacingAndGlyphs" >Frames</text>
<rect x="109" y="1165" width="390" height="46" rx="5" fill="none" stroke="#5e6060" stroke-width="2"/>
<path d="M126 1187 L134 1196 L150 1178" fill="none" stroke="#e06c2a" stroke-width="4"/>
<text x="162.00" y="1197" font-family="Liberation Sans" font-size="26" fill="#bbbbbb" textLength="287.32" lengthAdjust="spacingAndGlyphs" >&quot;main&quot;@1 i...&quot;: RUNNING</text>
<polygon points="468,1183 486,1183 477,1193" fill="#afb1b3"/>
<path d="M536 1200 V1172 M528 1180 L536 1171 L544 1180" fill="none" stroke="#5a5d5f" stroke-width="3"/>
<path d="M588 1168 V1197 M579 1188 L588 1197 L597 1188" fill="none" stroke="#afb1b3" stroke-width="3"/>
<rect x="102" y="1218" width="516" height="4" fill="#323232" />
<rect x="102" y="1222" width="516" height="398" fill="#4e4a3e" />
<rect x="102" y="1222" width="516" height="42" fill="#4b6eaf" />
<defs><clipPath id="frclip"><rect x="102" y="1222" width="516" height="398"/></clipPath></defs><g clip-path="url(#frclip)">
<text x="134.70" y="1252" font-family="Liberation Sans" font-size="26" fill="#bbbbbb" textLength="657.24" lengthAdjust="spacingAndGlyphs" >doResolveDependency:1245, DefaultListableBeanFactory </text>
<text x="791.94" y="1252" font-family="Liberation Sans" font-size="26" fill="#bbbbbb" font-style="italic" textLength="496.21" lengthAdjust="spacingAndGlyphs" >(org.springframework.beans.factory.support)</text>
<text x="134.70" y="1294" font-family="Liberation Sans" font-size="26" fill="#8a8a8a" textLength="621.13" lengthAdjust="spacingAndGlyphs" >resolveDependency:1207, DefaultListableBeanFactory </text>
<text x="755.83" y="1294" font-family="Liberation Sans" font-size="26" fill="#8a8a8a" font-style="italic" textLength="497.74" lengthAdjust="spacingAndGlyphs" >(org.springframework.beans.factory.support)</text>
<text x="134.70" y="1336" font-family="Liberation Sans" font-size="26" fill="#8a8a8a" textLength="861.66" lengthAdjust="spacingAndGlyphs" >inject:640, AutowiredAnnotationBeanPostProcessor$AutowiredFieldElement </text>
<text x="996.36" y="1336" font-family="Liberation Sans" font-size="26" fill="#8a8a8a" font-style="italic" textLength="248.12" lengthAdjust="spacingAndGlyphs" >(org.springframework)</text>
<text x="134.70" y="1378" font-family="Liberation Sans" font-size="26" fill="#8a8a8a" textLength="337.85" lengthAdjust="spacingAndGlyphs" >inject:116, InjectionMetadata </text>
<text x="472.55" y="1378" font-family="Liberation Sans" font-size="26" fill="#8a8a8a" font-style="italic" textLength="546.88" lengthAdjust="spacingAndGlyphs" >(org.springframework.beans.factory.annotation)</text>
<text x="134.70" y="1420" font-family="Liberation Sans" font-size="26" fill="#8a8a8a" textLength="773.04" lengthAdjust="spacingAndGlyphs" >postProcessProperties:399, AutowiredAnnotationBeanPostProcessor </text>
<text x="907.74" y="1420" font-family="Liberation Sans" font-size="26" fill="#8a8a8a" font-style="italic" textLength="52.90" lengthAdjust="spacingAndGlyphs" >(org)</text>
<text x="134.70" y="1462" font-family="Liberation Sans" font-size="26" fill="#8a8a8a" textLength="668.50" lengthAdjust="spacingAndGlyphs" >populateBean:1422, AbstractAutowireCapableBeanFactory </text>
<text x="803.20" y="1462" font-family="Liberation Sans" font-size="26" fill="#8a8a8a" font-style="italic" textLength="53.45" lengthAdjust="spacingAndGlyphs" >(org)</text>
<text x="134.70" y="1504" font-family="Liberation Sans" font-size="26" fill="#8a8a8a" textLength="651.25" lengthAdjust="spacingAndGlyphs" >doCreateBean:594, AbstractAutowireCapableBeanFactory </text>
<text x="785.95" y="1504" font-family="Liberation Sans" font-size="26" fill="#8a8a8a" font-style="italic" textLength="52.63" lengthAdjust="spacingAndGlyphs" >(org)</text>
<text x="134.70" y="1546" font-family="Liberation Sans" font-size="26" fill="#8a8a8a" textLength="616.05" lengthAdjust="spacingAndGlyphs" >createBean:517, AbstractAutowireCapableBeanFactory </text>
<text x="750.75" y="1546" font-family="Liberation Sans" font-size="26" fill="#8a8a8a" font-style="italic" textLength="52.46" lengthAdjust="spacingAndGlyphs" >(org)</text>
<text x="134.70" y="1588" font-family="Liberation Sans" font-size="26" fill="#8a8a8a" textLength="555.83" lengthAdjust="spacingAndGlyphs" >lambda$doGetBean$0:323, AbstractBeanFactory </text>
<text x="690.53" y="1588" font-family="Liberation Sans" font-size="26" fill="#8a8a8a" font-style="italic" textLength="246.34" lengthAdjust="spacingAndGlyphs" >(org.springframework)</text>
<text x="134.70" y="1630" font-family="Liberation Sans" font-size="26" fill="#8a8a8a" textLength="309.30" lengthAdjust="spacingAndGlyphs" >getObject:-1, 1827725498 </text>
<text x="444.00" y="1630" font-family="Liberation Sans" font-size="26" fill="#8a8a8a" font-style="italic" textLength="901.14" lengthAdjust="spacingAndGlyphs" >(org.springframework.beans.factory.support.AbstractBeanFactory$$Lambda$)</text>
</g>
<rect x="600" y="1222" width="16" height="210" fill="#ffffff" fill-opacity="0.1"/>
<rect x="104" y="1602" width="164" height="16" fill="#ffffff" fill-opacity="0.15"/>
<rect x="618" y="1104" width="2" height="516" fill="#2b2b2b" />
<rect x="668" y="1158" width="2" height="462" fill="#323232" />
<path d="M644 1174 V1195 M633.5 1184.5 H654.5" stroke="#afb1b3" stroke-width="4"/>
<rect x="634" y="1234" width="20" height="3" fill="#5a5d5f" />
<polygon points="632,1294 656,1294 644,1283" fill="#5a5d5f"/>
<polygon points="632,1334 656,1334 644,1345" fill="#5a5d5f"/>
<path d="M633 1395 V1378 H650" fill="none" stroke="#5a5d5f" stroke-width="2.5"/><rect x="637" y="1383" width="18" height="20" fill="#5a5d5f"/><g fill="#3c3f41"><rect x="640" y="1388" width="12" height="2"/><rect x="640" y="1393" width="12" height="2"/><rect x="640" y="1398" width="12" height="2"/></g>
<rect x="622" y="1422" width="44" height="44" rx="5" fill="#5b5e61"/>
<circle cx="636.5" cy="1445" r="6.2" fill="none" stroke="#c4c4c4" stroke-width="3.2"/><circle cx="651.5" cy="1445" r="6.2" fill="none" stroke="#c4c4c4" stroke-width="3.2"/><path d="M628.5 1442 L630 1438.5 H658 L659.5 1442" fill="none" stroke="#c4c4c4" stroke-width="2.8"/>
<text x="646.00" y="1137" font-family="Liberation Sans" font-size="26" fill="#bbbbbb" textLength="94.90" lengthAdjust="spacingAndGlyphs" >Variables</text>
<polygon points="676,1170 692,1179 676,1188" fill="#afb1b3"/>
<g fill="#ad843f"><rect x="716" y="1168" width="20" height="6"/><rect x="716" y="1176" width="20" height="6"/><rect x="716" y="1184" width="20" height="6"/></g>
<text x="748.50" y="1188" font-family="Liberation Sans" font-size="26" fill="#ff8a80" textLength="40.45" lengthAdjust="spacingAndGlyphs" >this</text>
<text x="799.00" y="1188" font-family="Liberation Sans" font-size="26" fill="#bbbbbb" textLength="12.15" lengthAdjust="spacingAndGlyphs" >=</text>
<text x="821.00" y="1188" font-family="Liberation Sans" font-size="26" fill="#8c8c8c" textLength="405.89" lengthAdjust="spacingAndGlyphs" >{DefaultListableBeanFactory@1723}</text>
<text x="1237.40" y="1188" font-family="Liberation Sans" font-size="26" fill="#bbbbbb" textLength="1511.52" lengthAdjust="spacingAndGlyphs" >&quot;org.springframework.beans.factory.support.DefaultListableBeanFactory@71809907: defining beans [org.springframework.context.an</text>
<text x="2753.00" y="1188" font-family="Liberation Sans" font-size="26" fill="#5a8bc8" textLength="15.75" lengthAdjust="spacingAndGlyphs" >...</text>
<text x="2779.00" y="1188" font-family="Liberation Sans" font-size="26" fill="#5a8bc8" textLength="53.89" lengthAdjust="spacingAndGlyphs" >View</text>
<polygon points="676,1210 692,1219 676,1228" fill="#afb1b3"/>
<circle cx="726" cy="1220" r="14" fill="#ad843f"/>
<text x="721.40" y="1225.5" font-family="Liberation Sans" font-size="26" fill="#3a3224" textLength="10.74" lengthAdjust="spacingAndGlyphs" stroke="#3a3224" stroke-width="0.6">p</text>
<text x="748.50" y="1228" font-family="Liberation Sans" font-size="26" fill="#559cff" textLength="114.43" lengthAdjust="spacingAndGlyphs" >descriptor</text>
<text x="872.80" y="1228" font-family="Liberation Sans" font-size="26" fill="#bbbbbb" textLength="12.35" lengthAdjust="spacingAndGlyphs" >=</text>
<text x="895.00" y="1228" font-family="Liberation Sans" font-size="26" fill="#8c8c8c" textLength="358.98" lengthAdjust="spacingAndGlyphs" >{DependencyDescriptor@1892}</text>
<text x="1263.00" y="1228" font-family="Liberation Sans" font-size="26" fill="#bbbbbb" textLength="186.47" lengthAdjust="spacingAndGlyphs" >&quot;field &#x27;mapUser&#x27;&quot;</text>
<polygon points="676,1250 692,1259 676,1268" fill="#afb1b3"/>
<circle cx="726" cy="1260" r="14" fill="#ad843f"/>
<text x="721.40" y="1265.5" font-family="Liberation Sans" font-size="26" fill="#3a3224" textLength="10.74" lengthAdjust="spacingAndGlyphs" stroke="#3a3224" stroke-width="0.6">p</text>
<text x="748.50" y="1268" font-family="Liberation Sans" font-size="26" fill="#ff8a80" textLength="125.15" lengthAdjust="spacingAndGlyphs" >beanName</text>
<text x="883.50" y="1268" font-family="Liberation Sans" font-size="26" fill="#bbbbbb" textLength="12.25" lengthAdjust="spacingAndGlyphs" >=</text>
<text x="907.70" y="1268" font-family="Liberation Sans" font-size="26" fill="#6a8759" textLength="576.70" lengthAdjust="spacingAndGlyphs" >&quot;annotationDependencyInjectionResolutionDemo&quot;</text>
<circle cx="726" cy="1300" r="14" fill="#ad843f"/>
<text x="721.40" y="1305.5" font-family="Liberation Sans" font-size="26" fill="#3a3224" textLength="10.74" lengthAdjust="spacingAndGlyphs" stroke="#3a3224" stroke-width="0.6">p</text>
<text x="748.50" y="1308" font-family="Liberation Sans" font-size="26" fill="#559cff" textLength="250.56" lengthAdjust="spacingAndGlyphs" >autowiredBeanNames</text>
<text x="1009.30" y="1308" font-family="Liberation Sans" font-size="26" fill="#bbbbbb" textLength="12.86" lengthAdjust="spacingAndGlyphs" >=</text>
<text x="1032.70" y="1308" font-family="Liberation Sans" font-size="26" fill="#8c8c8c" textLength="265.18" lengthAdjust="spacingAndGlyphs" >{LinkedHashSet@1894}</text>
<text x="1313.00" y="1308" font-family="Liberation Sans" font-size="26" fill="#bbbbbb" textLength="88.31" lengthAdjust="spacingAndGlyphs" >size = 0</text>
<polygon points="676,1330 692,1339 676,1348" fill="#afb1b3"/>
<circle cx="726" cy="1340" r="14" fill="#ad843f"/>
<text x="721.40" y="1345.5" font-family="Liberation Sans" font-size="26" fill="#3a3224" textLength="10.74" lengthAdjust="spacingAndGlyphs" stroke="#3a3224" stroke-width="0.6">p</text>
<text x="748.50" y="1348" font-family="Liberation Sans" font-size="26" fill="#559cff" textLength="163.05" lengthAdjust="spacingAndGlyphs" >typeConverter</text>
<text x="922.00" y="1348" font-family="Liberation Sans" font-size="26" fill="#bbbbbb" textLength="13.16" lengthAdjust="spacingAndGlyphs" >=</text>
<text x="945.60" y="1348" font-family="Liberation Sans" font-size="26" fill="#8c8c8c" textLength="342.33" lengthAdjust="spacingAndGlyphs" >{SimpleTypeConverter@1893}</text>
<g fill="#ad843f"><rect x="716" y="1368" width="20" height="6"/><rect x="716" y="1376" width="20" height="6"/><rect x="716" y="1384" width="20" height="6"/></g>
<text x="748.50" y="1388" font-family="Liberation Sans" font-size="26" fill="#ff8a80" textLength="255.61" lengthAdjust="spacingAndGlyphs" >previousInjectionPoint</text>
<text x="1014.50" y="1388" font-family="Liberation Sans" font-size="26" fill="#bbbbbb" textLength="63.57" lengthAdjust="spacingAndGlyphs" >= null</text>
<g fill="#ad843f"><rect x="716" y="1408" width="20" height="6"/><rect x="716" y="1416" width="20" height="6"/><rect x="716" y="1424" width="20" height="6"/></g>
<text x="748.50" y="1428" font-family="Liberation Sans" font-size="26" fill="#ff8a80" textLength="93.45" lengthAdjust="spacingAndGlyphs" >shortcut</text>
<text x="852.20" y="1428" font-family="Liberation Sans" font-size="26" fill="#bbbbbb" textLength="63.67" lengthAdjust="spacingAndGlyphs" >= null</text>
<polygon points="676,1450 692,1459 676,1468" fill="#afb1b3"/>
<g fill="#ad843f"><rect x="716" y="1448" width="20" height="6"/><rect x="716" y="1456" width="20" height="6"/><rect x="716" y="1464" width="20" height="6"/></g>
<text x="748.50" y="1468" font-family="Liberation Sans" font-size="26" fill="#559cff" textLength="49.23" lengthAdjust="spacingAndGlyphs" >type</text>
<text x="808.00" y="1468" font-family="Liberation Sans" font-size="26" fill="#bbbbbb" textLength="13.47" lengthAdjust="spacingAndGlyphs" >=</text>
<text x="831.00" y="1468" font-family="Liberation Sans" font-size="26" fill="#8c8c8c" textLength="139.13" lengthAdjust="spacingAndGlyphs" >{Class@310}</text>
<text x="979.60" y="1468" font-family="Liberation Sans" font-size="26" fill="#bbbbbb" textLength="268.09" lengthAdjust="spacingAndGlyphs" >&quot;interface java.util.Map&quot;</text>
<text x="1255.60" y="1468" font-family="Liberation Sans" font-size="26" fill="#5a8bc8" textLength="16.44" lengthAdjust="spacingAndGlyphs" >...</text>
<text x="1282.30" y="1468" font-family="Liberation Sans" font-size="26" fill="#5a8bc8" textLength="99.71" lengthAdjust="spacingAndGlyphs" >Navigate</text>
<g fill="#ad843f"><rect x="716" y="1488" width="20" height="6"/><rect x="716" y="1496" width="20" height="6"/><rect x="716" y="1504" width="20" height="6"/></g>
<text x="748.50" y="1508" font-family="Liberation Sans" font-size="26" fill="#ff8a80" textLength="59.63" lengthAdjust="spacingAndGlyphs" >value</text>
<text x="818.30" y="1508" font-family="Liberation Sans" font-size="26" fill="#bbbbbb" textLength="64.17" lengthAdjust="spacingAndGlyphs" >= null</text>
<rect x="672" y="1602" width="650" height="16" fill="#ffffff" fill-opacity="0.13"/>
<rect x="0" y="1620" width="2880" height="2" fill="#2b2b2b" />
<rect x="0" y="1622" width="2880" height="42" fill="#3c3f41" />
<rect x="312" y="1621" width="172" height="43" fill="#2d2f30" />
<rect x="0" y="1664" width="2880" height="2" fill="#484a4c" />
<rect x="66" y="1634" width="4" height="22" fill="#afb1b3" />
<rect x="70" y="1645.7" width="12" height="4.3" fill="#afb1b3" />
<rect x="77.9" y="1641.6" width="4.1" height="8.4" fill="#afb1b3" />
<polygon points="73.7,1642.1 86.7,1642.1 80.2,1634.1" fill="#afb1b3"/>
<text x="96.00" y="1654" font-family="Liberation Sans" font-size="26" fill="#bbbbbb" textLength="54.22" lengthAdjust="spacingAndGlyphs" >9: Git</text>
<rect x="96" y="1657" width="14" height="2" fill="#bbbbbb" />
<polygon points="195,1634 212,1645 195,1656" fill="#afb1b3"/>
<text x="225.60" y="1654" font-family="Liberation Sans" font-size="26" fill="#bbbbbb" textLength="65.74" lengthAdjust="spacingAndGlyphs" >4: Run</text>
<rect x="226" y="1657" width="14" height="2" fill="#bbbbbb" />
<g transform="translate(346.8,1645.5) scale(0.86)">
<path d="M-6 -14.5 L0 -8.5 L6 -14.5" fill="none" stroke="#afb1b3" stroke-width="4.2"/>
<rect x="-12" y="-7.7" width="24" height="3.4" fill="#afb1b3" />
<rect x="-12" y="-0.8999999999999999" width="24" height="3.4" fill="#afb1b3" />
<rect x="-12" y="5.3" width="24" height="3.4" fill="#afb1b3" />
<ellipse cx="0" cy="0" rx="8.8" ry="11.2" fill="#afb1b3"/>
</g>
<circle cx="356.3" cy="1654.0" r="5.5" fill="#1f2a20"/><circle cx="356.3" cy="1654.0" r="4.3" fill="#00f000"/>
<text x="367.80" y="1654" font-family="Liberation Sans" font-size="26" fill="#e8e8e8" textLength="95.64" lengthAdjust="spacingAndGlyphs" >5: Debug</text>
<rect x="368" y="1657" width="14" height="2" fill="#e8e8e8" />
<g fill="#afb1b3"><rect x="510" y="1635" width="4" height="4"/><rect x="516" y="1635" width="14" height="4"/><rect x="510" y="1643" width="4" height="4"/><rect x="516" y="1643" width="14" height="4"/><rect x="510" y="1651" width="4" height="4"/><rect x="516" y="1651" width="14" height="4"/></g>
<text x="540.00" y="1654" font-family="Liberation Sans" font-size="26" fill="#bbbbbb" textLength="90.74" lengthAdjust="spacingAndGlyphs" >6: TODO</text>
<rect x="540" y="1657" width="14" height="2" fill="#bbbbbb" />
<polygon points="672,1643 683,1633 688,1637 684,1641 698,1655 694,1659 680,1645 676,1649" fill="#afb1b3"/>
<text x="707.00" y="1654" font-family="Liberation Sans" font-size="26" fill="#bbbbbb" textLength="51.83" lengthAdjust="spacingAndGlyphs" >Build</text>
<path d="M823 1633 Q806 1634 800 1646 Q798 1652 804 1653 Q818 1654 822 1643 Q824 1638 823 1633 Z" fill="#afb1b3"/><path d="M802 1653 Q810 1645 818 1642" fill="none" stroke="#3c3f41" stroke-width="1.5"/>
<text x="832.40" y="1654" font-family="Liberation Sans" font-size="26" fill="#bbbbbb" textLength="68.03" lengthAdjust="spacingAndGlyphs" >Spring</text>
<rect x="946" y="1634" width="22" height="20" fill="#afb1b3"/><path d="M950 1638 L955 1642 L950 1646 M956 1649 H962" fill="none" stroke="#3c3f41" stroke-width="2"/>
<text x="978.00" y="1654" font-family="Liberation Sans" font-size="26" fill="#bbbbbb" textLength="90.72" lengthAdjust="spacingAndGlyphs" >Terminal</text>
<circle cx="2694.5" cy="1644" r="12.5" fill="#499c54"/>
<text x="2691.00" y="1652" font-family="Liberation Sans" font-size="20" fill="#ffffff" textLength="7.08" lengthAdjust="spacingAndGlyphs" >1</text>
<text x="2717.50" y="1654" font-family="Liberation Sans" font-size="26" fill="#bbbbbb" textLength="102.04" lengthAdjust="spacingAndGlyphs" >Event Log</text>
<rect x="0" y="1666" width="2880" height="38" fill="#3c3f41" />
<rect x="0" y="1704" width="2880" height="2" fill="#b9bbbe" />
<path d="M13 1682 V1698 H31" fill="none" stroke="#afb1b3" stroke-width="2"/><rect x="17" y="1675" width="18" height="18" fill="none" stroke="#afb1b3" stroke-width="2"/>
<text x="54.60" y="1693" font-family="Liberation Sans" font-size="26" fill="#bbbbbb" textLength="435.23" lengthAdjust="spacingAndGlyphs" >All files are up-to-date (moments ago)</text>
<text x="2323.80" y="1693" font-family="Liberation Sans" font-size="26" fill="#bbbbbb" textLength="87.54" lengthAdjust="spacingAndGlyphs" >1253:59</text>
<text x="2437.00" y="1693" font-family="Liberation Sans" font-size="26" fill="#8c8c8c" textLength="23.25" lengthAdjust="spacingAndGlyphs" >LF</text>
<text x="2487.60" y="1693" font-family="Liberation Sans" font-size="26" fill="#8c8c8c" >UTF-8</text>
<rect x="2545" y="1652.5" width="335" height="51" rx="3" fill="#ffffff" stroke="#c8d6e8" stroke-width="1.5"/>
<defs><linearGradient id="sg" x1="0" y1="0" x2="0" y2="1"><stop offset="0" stop-color="#f5773a"/><stop offset="1" stop-color="#e4461a"/></linearGradient><linearGradient id="gg" x1="0" y1="0" x2="1" y2="1"><stop offset="0" stop-color="#a05cf0"/><stop offset="1" stop-color="#4a6ef0"/></linearGradient></defs>
<path d="M2529 1653 L2569 1644.8 Q2574 1643.8 2575.5 1648 L2587 1680 Q2589 1686 2583 1689 L2544 1703 Q2538.5 1705 2537 1700 L2524 1661 Q2523 1655 2529 1653 Z" fill="url(#sg)"/>
<path d="M2571.9 1655 L2574.5 1662 Q2560 1661 2550 1664.5 Q2546 1667 2552 1668.5 Q2566 1668 2575 1671 Q2583 1676 2578 1683 Q2568 1692 2542 1693.5 L2539 1687 Q2553 1687 2563 1681 Q2562 1678.5 2548 1679.5 Q2536 1679 2533.5 1672 Q2535 1661 2552 1656.5 Q2562 1654.5 2571.9 1655 Z" fill="#ffffff"/>
<g stroke="#0a6fd8" stroke-width="3.2" fill="none"><path d="M2602 1669 H2628 M2609 1665 V1673 M2621 1665 V1673 M2605 1677 H2625 V1684 H2605 Z M2615 1674 V1684 M2601 1685 H2629 M2615 1684 L2603 1693 M2615 1684 L2628 1693"/></g>
<circle cx="2656" cy="1671.7" r="3.8" fill="#0a6fd8"/><circle cx="2670.6" cy="1680" r="3.8" fill="#0a6fd8"/>
<rect x="2706" y="1663" width="10" height="20" rx="5" fill="#0a6fd8"/><path d="M2700 1678 Q2701 1690 2711 1690 Q2721 1690 2722 1678 M2711 1690 V1695" fill="none" stroke="#0a6fd8" stroke-width="3"/>
<rect x="2745" y="1666" width="29.5" height="22" rx="3" fill="#0a6fd8"/><g fill="#ffffff"><rect x="2749" y="1670" width="4" height="3"/><rect x="2755" y="1670" width="4" height="3"/><rect x="2761" y="1670" width="4" height="3"/><rect x="2767" y="1670" width="4" height="3"/><rect x="2749" y="1676" width="4" height="3"/><rect x="2755" y="1676" width="4" height="3"/><rect x="2761" y="1676" width="4" height="3"/><rect x="2767" y="1676" width="4" height="3"/><rect x="2752" y="1682" width="16" height="3"/></g>
<path d="M2792.6 1670 L2801 1665 Q2807 1669 2813 1665 L2822 1670 L2819 1677 L2815 1676 V1690 H2799 V1676 L2795.6 1677 Z" fill="#0a6fd8"/>
<g fill="url(#gg)"><rect x="2842" y="1666" width="11" height="11" rx="3"/><rect x="2856" y="1666" width="11.7" height="11" rx="3"/><rect x="2842" y="1680" width="11" height="12" rx="3"/><rect x="2856" y="1680" width="11.7" height="12" rx="3"/></g><rect x="2859" y="1669" width="5.5" height="5" fill="#ffffff"/>
<text x="2654.70" y="1693.7" font-family="Liberation Sans" font-size="20" fill="#6b6b6b" textLength="65.91" lengthAdjust="spacingAndGlyphs" fill-opacity="0.85">CSDN @</text>
<g stroke="#6b6b6b" stroke-opacity="0.8" stroke-width="1.6" fill="none">
<path transform="translate(2725.0,1678)" d="M3 2 H15 V10 H3 Z M6 12 L2 18 M12 12 L17 18"/>
<path transform="translate(2744.9,1678)" d="M1 1 H18 V19 H1 Z M4 7 H15 M9.5 3 V16 M9.5 8 L4 15 M9.5 8 L15 15"/>
<path transform="translate(2764.8,1678)" d="M2 6 H17 Q17 19 10 19 M9 1 Q9 12 1 19 M4 10 L7 13 M12 1 L14 3"/>
<path transform="translate(2784.7,1678)" d="M5 1 L1 9 M3 6 V19 M8 3 H18 M10 1 L7 7 M13 6 V19 M9 11 L7 16 M16 11 L18 16"/>
<path transform="translate(2804.6,1678)" d="M1 2 H18 M9 2 L7 6 M3 6 H16 V19 M3 6 V19 M7.5 6 V17 M11.5 6 V17"/>
<path transform="translate(2824.5,1678)" d="M2 2 L4 5 M1 8 L3 10 M1 18 L5 12 M8 1 H17 V9 H8 Z M8 5 H17 M7 12 H18 V19 H7 Z M10.5 12 V19 M14.5 12 V19"/>
<path transform="translate(2844.4,1678)" d="M3 1 H14 L9 5 M5 4 L12 8 M1 10 H18 M9.5 8 V19 M9 11 L2 17 M10 11 L17 17"/>
</g>
<polygon points="1092.7,325 1010,429.5 1013,432 996,440 1001,422 1004.5,425" fill="#fc3535"/>
<polygon points="2462.7,716 2633.5,526 2630.6,523.5 2647,516.2 2642.3,533.2 2639.5,530.5" fill="#fc3535"/>
</svg></body></html>
